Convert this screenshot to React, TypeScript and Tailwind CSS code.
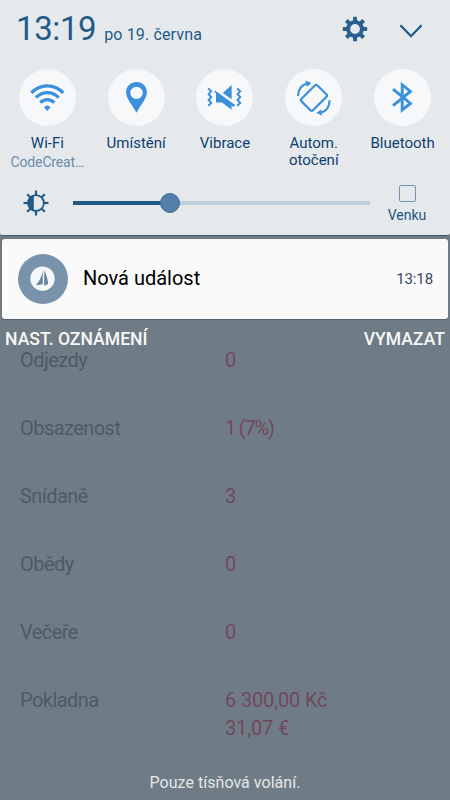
import type { ReactNode } from "react";

const ANGLES = [0, 45, 90, 135, 180, 225, 270, 315];

function WifiIcon() {
  return (
    <g fill="none" stroke="currentColor" strokeWidth="3.2">
      <path d="M12.4 23.9a21.4 21.4 0 0 1 31.8 0" />
      <path d="M16.9 28.7a15.4 15.4 0 0 1 22.8 0" />
      <path d="M21.4 33.6a9.4 9.4 0 0 1 13.8 0" />
      <path d="M25 38.2q3.3-3.6 6.6 0L28.3 42z" fill="currentColor" stroke="none" />
    </g>
  );
}

function PinIcon() {
  return (
    <path
      fill="currentColor"
      fillRule="evenodd"
      d="M28.5 13c-6 0-10.4 4.5-10.4 10.3 0 6.2 5.4 11.5 10.4 20.5 5-9 10.4-14.3 10.4-20.5C38.9 17.5 34.5 13 28.5 13zm0 4.7a6.2 6.2 0 1 1 0 12.4 6.2 6.2 0 0 1 0-12.4z"
    />
  );
}

function VibrateIcon() {
  return (
    <g fill="currentColor">
      <path d="M35.6 16v14.2l-8.8-6.1z" />
      <path d="M19 21.5l20.2 14.6-1.5 1.9-2.1-1.4v4.2L26 33.4h-6v-9.2l-1.8-1.2z" />
      <g fill="none" stroke="currentColor" strokeWidth="2">
        <path d="M12.2 19.4l3 2.9-2.6 2.9 2.6 2.9-2.6 2.9 2.6 2.9-3 2.9" />
        <path d="M41.2 19.4l3 2.9-2.6 2.9 2.6 2.9-2.6 2.9 2.6 2.9-3 2.9" />
      </g>
    </g>
  );
}

function RotateIcon() {
  return (
    <g fill="none" stroke="currentColor" strokeWidth="2.2">
      <path d="M29.9 16.5q1.3-1.3 2.6 0l8.9 8.8q1.3 1.3 0 2.6L28 41.3q-1.3 1.3-2.6 0l-8.9-8.9q-1.3-1.3 0-2.6z" />
      <path d="M13.1 27c.2-6.2 3.4-11.2 9-12.5" />
      <path d="M44.6 31.3c-.2 6.2-3.4 11.2-9 12.5" />
      <path fill="currentColor" stroke="none" d="M20.5 11.5l6 2.5-4.7 3.7zM37.2 46.6l-6-2.5 4.7-3.7z" />
    </g>
  );
}

function BluetoothIcon() {
  return (
    <path
      fill="none"
      stroke="currentColor"
      strokeWidth="2.9"
      d="M19 20.2l17.4 14.2-8.200 6.500V15.800l8.200 6.700L19 36.600"
      strokeMiterlimit="10"
    />
  );
}

function GearIcon() {
  return (
    <svg viewBox="-13 -13 26 26" className="h-[26px] w-[26px] text-[#2a5f8f]">
      <circle r="6.9" fill="none" stroke="currentColor" strokeWidth="4" />
      {ANGLES.map((a) => (
        <rect key={a} x="-2" y="-12.2" width="4" height="5" rx=".5" fill="currentColor" transform={`rotate(${a})`} />
      ))}
    </svg>
  );
}

function BrightnessIcon() {
  return (
    <svg viewBox="-13 -13 26 26" className="h-[26px] w-[26px] text-[#1f5a88]">
      <circle r="7.9" fill="none" stroke="currentColor" strokeWidth="1.8" />
      <path d="M-2.2-8.2v16.4a8.5 8.5 0 0 1 0-16.4z" fill="currentColor" />
      {ANGLES.map((a) => (
        <rect key={a} x="-1.1" y="-12.5" width="2.2" height="4.5" fill="currentColor" transform={`rotate(${a})`} />
      ))}
    </svg>
  );
}

interface Toggle {
  label: string;
  sub?: string;
  icon: ReactNode;
}

const toggles: Toggle[] = [
  { label: "Wi-Fi", sub: "CodeCreat…", icon: <WifiIcon /> },
  { label: "Umístění", icon: <PinIcon /> },
  { label: "Vibrace", icon: <VibrateIcon /> },
  { label: "Autom. otočení", icon: <RotateIcon /> },
  { label: "Bluetooth", icon: <BluetoothIcon /> },
];

const stats: [string, string[]][] = [
  ["Odjezdy", ["0"]],
  ["Obsazenost", ["1 (7%)"]],
  ["Snídaně", ["3"]],
  ["Obědy", ["0"]],
  ["Večeře", ["0"]],
  ["Pokladna", ["6 300,00 Kč", "31,07 €"]],
];

function QuickPanel() {
  return (
    <section className="h-[236px] rounded-b-[3px] border-b border-[#465866] bg-[#e5e9ec]">
      <header className="flex h-[60px] items-start pl-4 text-[#1f5a88]">
        <span className="mt-[9px] text-[33px] leading-[40px] tracking-[-0.4px]">13:19</span>
        <span className="mt-[24px] ml-[8px] text-base leading-[22px] tracking-[0.14px]">po 19. června</span>
        <div className="mt-4 mr-[27px] ml-auto flex items-center gap-[31px]">
          <GearIcon />
          <svg viewBox="0 0 24 26" className="h-[26px] w-6" fill="none" stroke="currentColor" strokeWidth="2.3">
            <path d="M1.4 9.2l10.6 11 10.6-11" />
          </svg>
        </div>
      </header>

      <div className="grid h-[117px] grid-cols-5 px-[3px] pt-[9px]">
        {toggles.map((t) => (
          <div key={t.label} className="flex flex-col items-center text-center">
            <svg viewBox="0 0 57 57" className="h-[57px] w-[57px] shrink-0 rounded-full bg-[#f6f8fa] text-[#3a90dd]">
              {t.icon}
            </svg>
            <span className="mt-[8.5px] w-[70px] text-[15px] leading-[17.5px] text-[#0f3f70]">{t.label}</span>
            {t.sub && <span className="mt-[2px] text-sm leading-[17px] tracking-[-0.15px] text-[#6a8cac]">{t.sub}</span>}
          </div>
        ))}
      </div>

      <div className="flex h-[52px] items-center pl-[23px]">
        <BrightnessIcon />
        <div className="relative ml-6 h-[4px] w-[297px] bg-[#bfced9]">
          <div className="h-full w-[97px] bg-[#205985]" />
          <div className="absolute -top-[8px] left-[87px] h-5 w-5 rounded-full border border-[#416c98] bg-[#527ea8]" />
        </div>
        <div className="mt-[2px] ml-4 flex w-[42px] flex-col items-center">
          <div className="h-[17px] w-[17px] rounded-[2px] border border-[#7894b0]" />
          <span className="mt-1 text-sm leading-[18px] text-[#1f5582]">Venku</span>
        </div>
      </div>
    </section>
  );
}

function NotificationCard() {
  return (
    <article className="mx-[2px] mt-[3px] flex h-[79.5px] items-center rounded-[3px] bg-[#fafafa] pr-[15px] pl-4 shadow-[0_1px_1px_#52616c]">
      <svg viewBox="0 0 50 50" className="h-[50px] w-[50px] rounded-full bg-[#7893ab]">
        <circle cx="24.5" cy="24.7" r="12.2" fill="#f5f8fa" />
        <path d="M24.7 16.5c-.8 6-3.3 11-6.9 14.7l6.9-.9zM26.2 16c2.2 4.5 3.6 9.500 4 14.100l-4 1.600z" fill="#6583a0" />
      </svg>
      <span className="-mt-px ml-[15px] text-xl text-black">Nová událost</span>
      <span className="ml-auto text-[15px] tracking-[-0.1px] text-[#34495e]">13:18</span>
    </article>
  );
}

export default function App() {
  return (
    <main className="flex h-[800px] w-[450px] flex-col overflow-hidden bg-[#707c85] font-['Roboto',sans-serif]">
      <QuickPanel />
      <NotificationCard />

      <div className="mt-[10.5px] flex h-5 justify-between px-[5px] text-[17.6px] leading-5 font-medium text-[#f7f8f8] [text-shadow:0_1px_2px_#3f4a52]">
        <button className="leading-5">NAST. OZNÁMENÍ</button>
        <button className="leading-5">VYMAZAT</button>
      </div>

      <dl className="-mt-[3px] grid auto-rows-[68.1px] grid-cols-[205px_1fr] pl-5 text-[20px] leading-7">
        {stats.map(([label, values]) => (
          <div key={label} className="contents">
            <dt className="tracking-[-0.55px] text-[#4e5a65]">{label}</dt>
            <dd className="text-[#704860]">
              {values.map((v) => (
                <div key={v} className={v.includes("%") ? "tracking-[-1.2px]" : "tracking-[-0.15px]"}>
                  {v}
                </div>
              ))}
            </dd>
          </div>
        ))}
      </dl>

      <footer className="mt-auto pb-[7px] text-center text-base leading-[20px] tracking-[0.03px] text-[#e3e7e9]">
        Pouze tísňová volání.
      </footer>
    </main>
  );
}
